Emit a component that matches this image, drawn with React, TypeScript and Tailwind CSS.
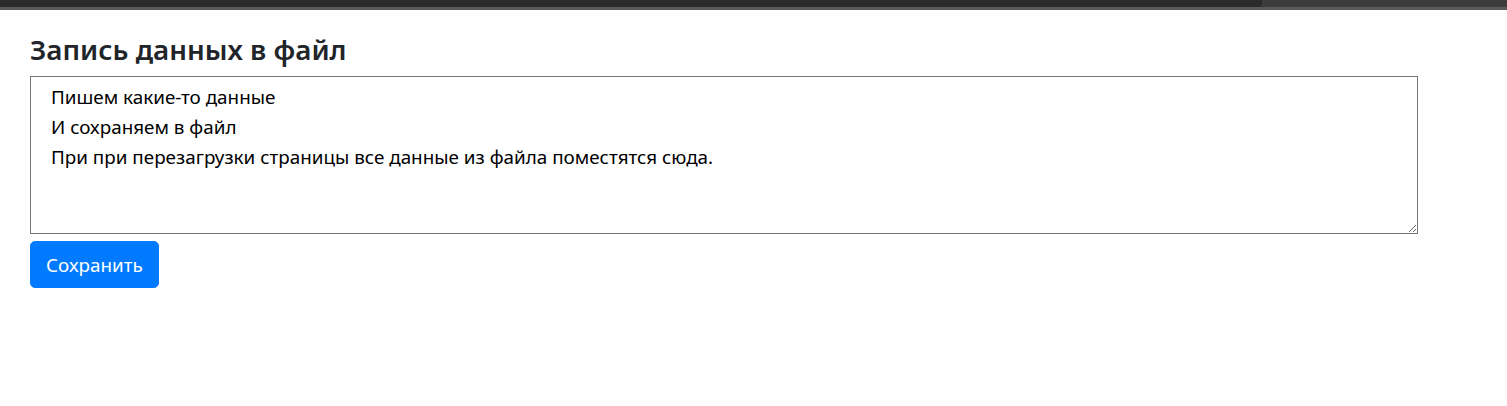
const text = `Пишем какие-то данные
И сохраняем в файл
При при перезагрузки страницы все данные из файла поместятся сюда.`;

export default function App() {
  return (
    <div className="min-h-[406px] bg-white font-['Noto_Sans',sans-serif] text-[#212529]">
      {/* верхняя полоса браузера */}
      <div className="flex h-[7px] bg-[#3c3c3c]">
        <div className="w-[1262px] rounded-br-[4px] bg-[#2a2a2a]" />
      </div>
      <div className="h-[3px] bg-[#5a5a5a]" />

      <div className="px-[30px] pt-[22px]">
        <h2 className="mb-[10px] text-[27.8px] leading-[34px] font-semibold">Запись данных в файл</h2>
        <textarea
          className="block h-[158px] w-[1388px] resize border border-[#767676] py-[5px] pr-3 pl-[20px] text-[18.85px] leading-[30px] text-black outline-none"
          defaultValue={text}
        />
        <button className="mt-[7px] rounded-[5px] border border-[#007bff] bg-[#007bff] px-[15px] py-[7.5px] text-[18.85px] leading-[30px] text-white">
          Сохранить
        </button>
      </div>
    </div>
  );
}
